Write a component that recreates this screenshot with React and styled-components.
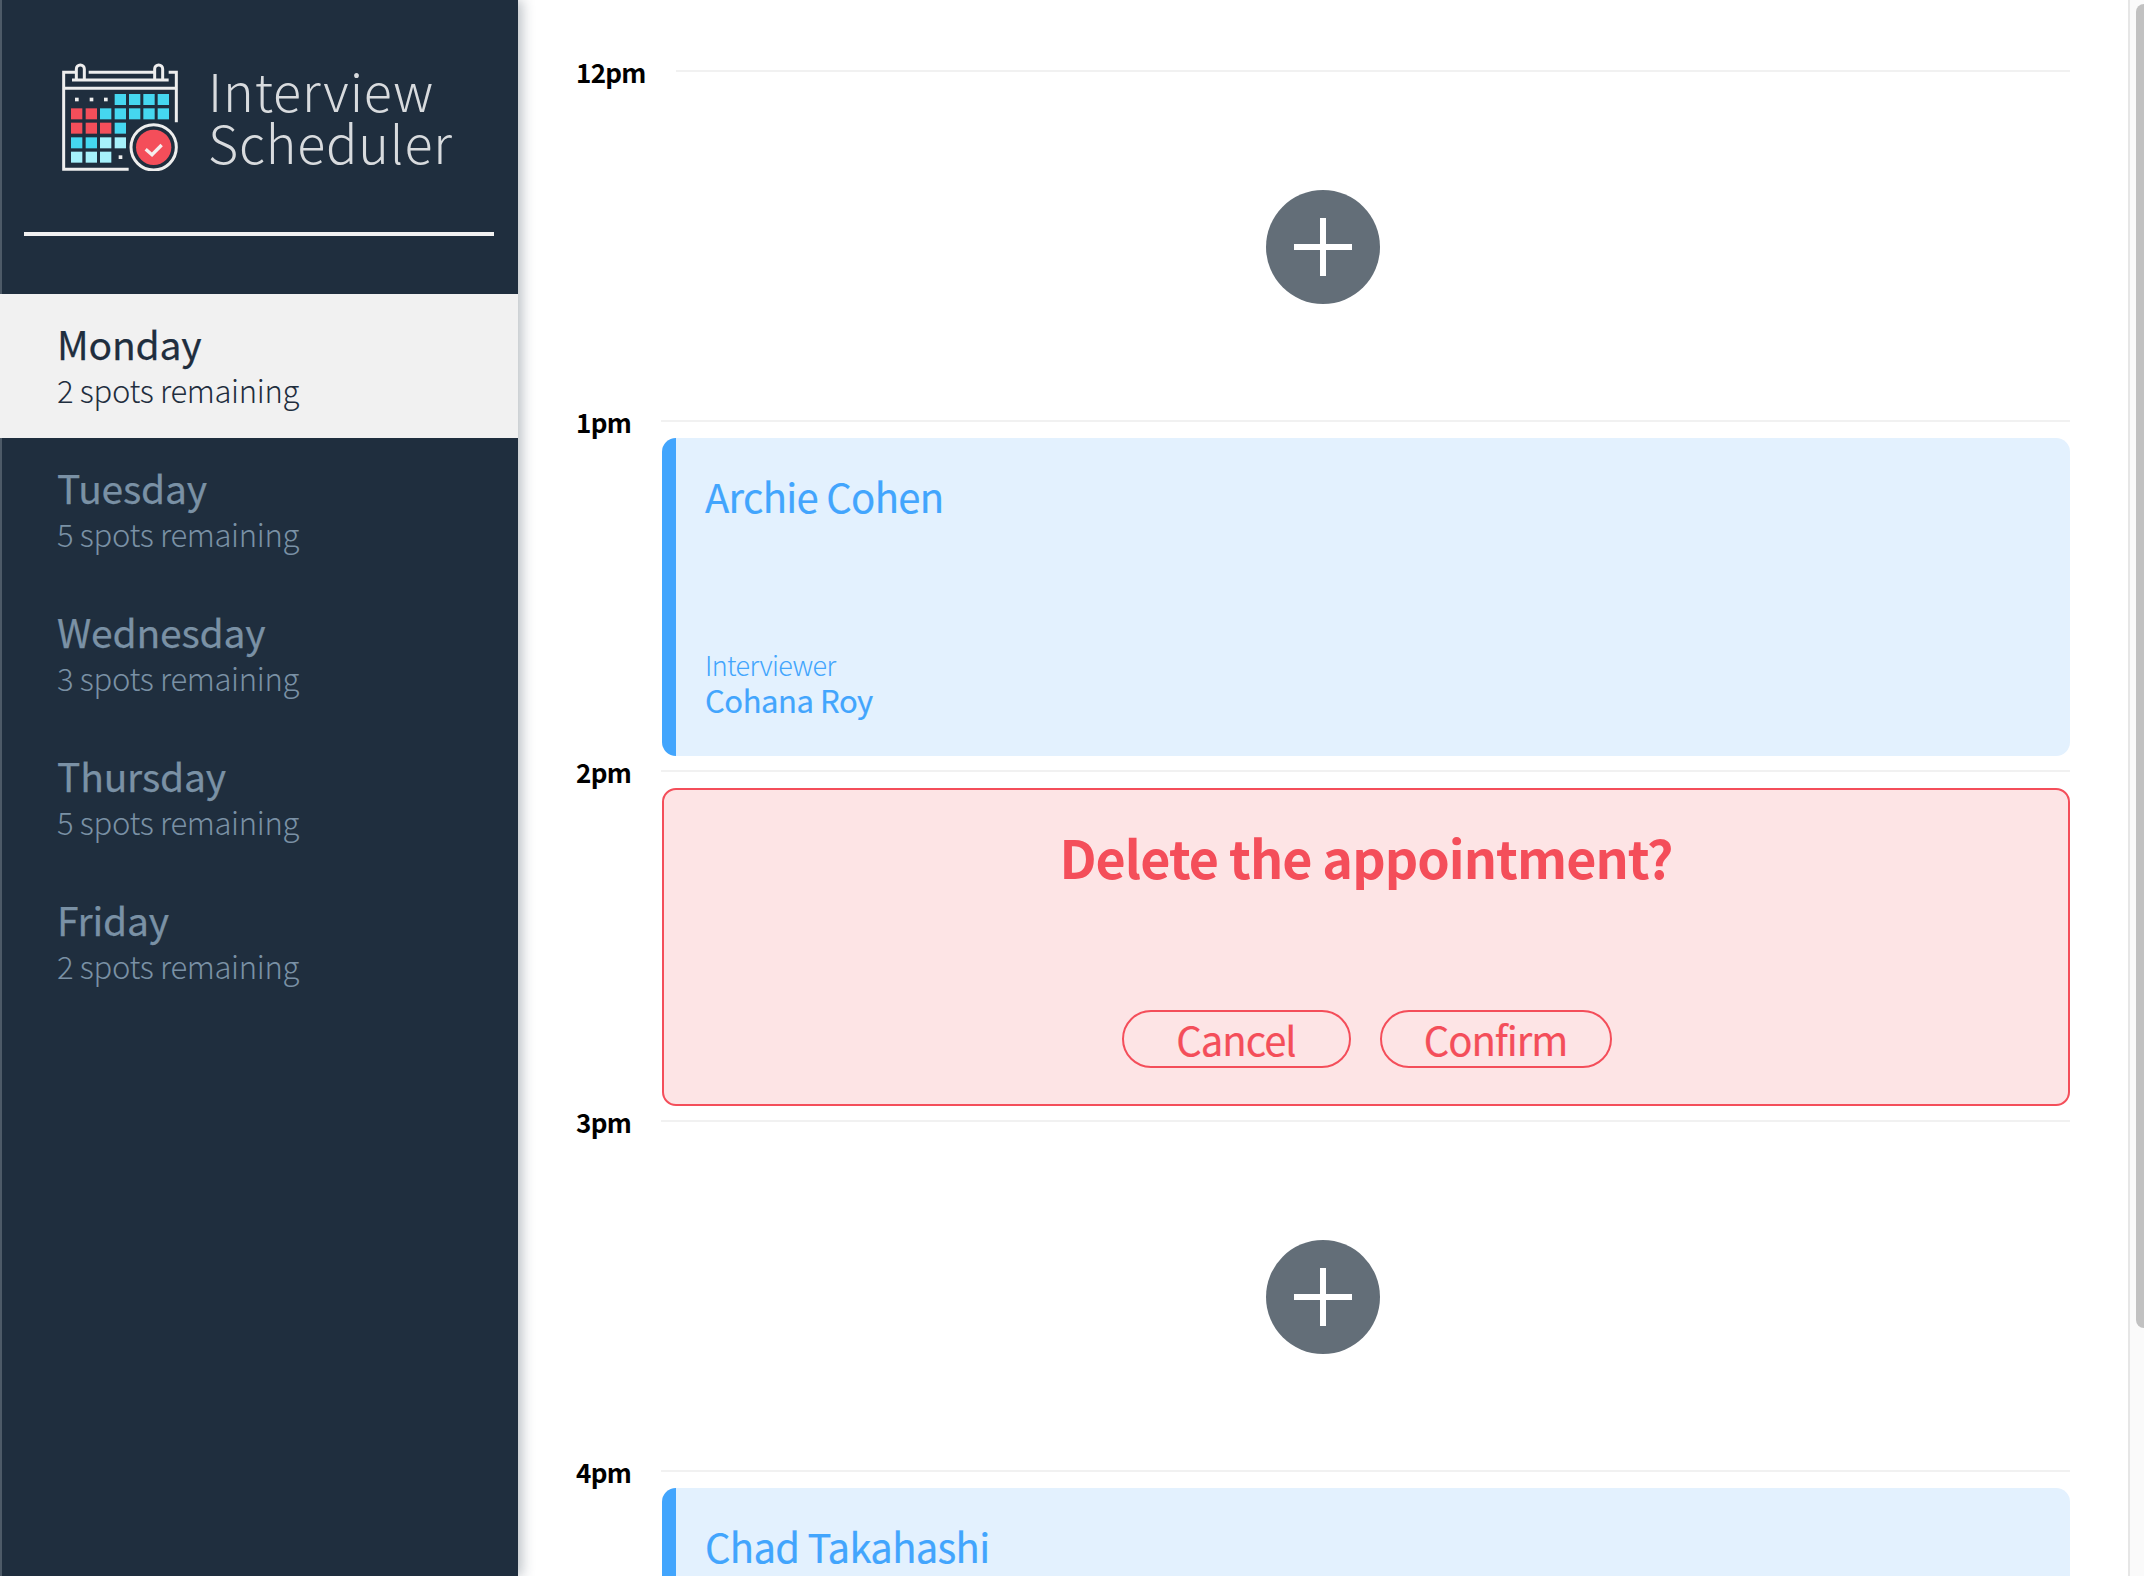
import React from "react";
import styled, { createGlobalStyle } from "styled-components";

const GlobalStyle = createGlobalStyle`
  html, body {
    margin: 0;
    height: 100%;
    overflow: hidden;
    background: #fff;
  }
  * { box-sizing: border-box; }
`;

const FONT = `"Noto Sans CJK SC", "Open Sans", sans-serif`;

const Page = styled.div`
  display: flex;
  height: 1576px;
  overflow: hidden;
  font-family: ${FONT};
`;

const Sidebar = styled.nav`
  flex: 0 0 518px;
  background: #1f2e3e;
  box-shadow: inset 2px 0 0 #4d5a67, 4px 0 12px rgba(31, 46, 62, 0.3);
  z-index: 1;
`;

const Brand = styled.div`
  height: 294px;
  padding: 63px 24px 0;
`;

const BrandRow = styled.div`
  display: flex;
  align-items: center;
  gap: 30px;
  padding-left: 37px;
  height: 173px;
  border-bottom: 4px solid #f1f1f1;
  padding-bottom: 62px;
`;

const BrandTitle = styled.div`
  font-size: 52px;
  font-weight: 300;
  line-height: 52px;
  color: #d8dbde;
  letter-spacing: 0.85px;
  margin-top: -1px;
`;

const DayItem = styled.div`
  height: 144px;
  padding: 23px 0 0 57px;
  background: ${(p) => (p.$active ? "#f1f1f1" : "transparent")};
  color: ${(p) => (p.$active ? "#1f2e3e" : "#7a91a5")};
`;

const DayName = styled.div`
  font-size: 39px;
  line-height: 52px;
  font-weight: 400;
  letter-spacing: -0.2px;
  -webkit-text-stroke: 0.25px currentColor;
`;

const DaySpots = styled.div`
  font-size: 31px;
  line-height: 42px;
  font-weight: 300;
  letter-spacing: -0.33px;
`;

const Main = styled.main`
  flex: 1;
  min-width: 0;
  padding: 70px 58px 0;
  overflow: hidden;
`;

const Slot = styled.article`
  height: 350px;
`;

const SlotHeader = styled.div`
  display: flex;
  align-items: center;
  height: 2px;
`;

const SlotTime = styled.h4`
  margin: 0 30px 0 0;
  font-size: 26px;
  font-weight: 700;
  letter-spacing: -0.7px;
  color: #000;
`;

const SlotRule = styled.div`
  flex: 1;
  height: 2px;
  background: #f1f1f1;
`;

const EmptyBody = styled.div`
  height: 348px;
  padding-top: 2px;
  display: flex;
  align-items: center;
  justify-content: center;
`;

const AddButton = styled.div`
  width: 114px;
  height: 114px;
  border-radius: 50%;
  background: #636e78;
  display: flex;
  align-items: center;
  justify-content: center;
`;

const BookedCard = styled.div`
  margin: 16px 0 0 86px;
  height: 318px;
  background: #e3f1fe;
  border-left: 14px solid #42a5fd;
  border-radius: 14px;
  padding: 26px 29px 39px;
  color: #42a5fd;
  display: flex;
  flex-direction: column;
`;

const StudentName = styled.div`
  font-size: 40px;
  line-height: 64px;
  font-weight: 400;
  letter-spacing: -0.7px;
  -webkit-text-stroke: 0.2px currentColor;
`;

const InterviewerBlock = styled.div`
  margin-top: auto;
`;

const InterviewerLabel = styled.div`
  font-size: 27px;
  line-height: 34px;
  font-weight: 300;
  letter-spacing: -0.65px;
`;

const InterviewerName = styled.div`
  font-size: 31px;
  line-height: 35px;
  font-weight: 400;
  letter-spacing: -0.45px;
  -webkit-text-stroke: 0.2px currentColor;
`;

const ConfirmCard = styled.div`
  margin: 16px 0 0 86px;
  height: 318px;
  background: #fde4e5;
  border: 2px solid #f44e5a;
  border-radius: 14px;
  color: #f44e5a;
  display: flex;
  flex-direction: column;
  align-items: center;
  padding: 33px 0 36px;
`;

const ConfirmTitle = styled.h1`
  margin: 0;
  font-size: 52px;
  line-height: 68px;
  font-weight: 700;
  letter-spacing: -0.95px;
`;

const ConfirmActions = styled.div`
  margin-top: auto;
  margin-left: 1px;
  display: flex;
  gap: 29px;
`;

const PillButton = styled.div`
  width: ${(p) => p.$w}px;
  height: 58px;
  border: 2px solid #f44e5a;
  border-radius: 29px;
  display: flex;
  align-items: center;
  justify-content: center;
  font-size: 40px;
  line-height: 54px;
  font-weight: 400;
  letter-spacing: -1px;
  -webkit-text-stroke: 0.2px currentColor;
`;

const ScrollTrack = styled.div`
  flex: 0 0 16px;
  background: #fafafa;
  border-left: 2px solid #e6e6e6;
  padding: 4px 0 0 6px;
  overflow: hidden;
`;

const ScrollThumb = styled.div`
  width: 20px;
  height: 1324px;
  background: #c1c1c1;
  border-radius: 8px;
`;

const Logo = () => {
  const xs = [92, 136, 179, 223, 266, 309, 352];
  const ys = [130, 173, 216, 260, 303];
  const C = "#45d7f0";
  const R = "#f44e5a";
  const L = "#a6f1fb";
  const grid = [
    ["d", "d", "d", C, C, C, C],
    [R, R, C, C, C, C, C],
    [R, R, R, C],
    [C, C, L, L],
    [L, L, L, "d"],
  ];
  return (
    <svg width="117" height="108" viewBox="62 37 351 324" style={{ flex: "none" }}>
      <g fill="none" stroke="#eeeeee" strokeWidth="9">
        <path d="M106 65H70V356H265" />
        <path d="M145 65H345" />
        <path d="M385 65H408V215" />
        <path d="M70 113H408" />
        <path d="M95 88H385" />
        <path d="M108 88V55a12 12 0 0 1 24 0V88" />
        <path d="M343 88V55a12 12 0 0 1 24 0V88" />
        <circle cx="340" cy="290" r="68" />
      </g>
      {grid.map((row, r) =>
        row.map((c, i) =>
          c === "d" ? (
            <rect key={`${r}-${i}`} x={xs[i] + 12} y={ys[r] + 11} width="11" height="11" fill="#eeeeee" />
          ) : (
            <rect key={`${r}-${i}`} x={xs[i]} y={ys[r]} width="34" height="33" fill={c} />
          )
        )
      )}
      <circle cx="340" cy="290" r="53" fill={R} />
      <path d="M316 296l19 16 29-29" fill="none" stroke="#f5eeee" strokeWidth="10" />
    </svg>
  );
};

const PlusIcon = () => (
  <svg width="58" height="58" viewBox="0 0 58 58">
    <path d="M29 0V58M0 29H58" stroke="#fff" strokeWidth="6" />
  </svg>
);

const DAYS = [
  { name: "Monday", spots: 2, active: true },
  { name: "Tuesday", spots: 5 },
  { name: "Wednesday", spots: 3 },
  { name: "Thursday", spots: 5 },
  { name: "Friday", spots: 2 },
];

const TimeHeader = ({ time }) => (
  <SlotHeader>
    <SlotTime>{time}</SlotTime>
    <SlotRule />
  </SlotHeader>
);

const App = () => (
  <Page>
    <GlobalStyle />
    <Sidebar>
      <Brand>
        <BrandRow>
          <Logo />
          <BrandTitle>
            Interview
            <br />
            Scheduler
          </BrandTitle>
        </BrandRow>
      </Brand>
      {DAYS.map((d) => (
        <DayItem key={d.name} $active={d.active}>
          <DayName>{d.name}</DayName>
          <DaySpots>{d.spots} spots remaining</DaySpots>
        </DayItem>
      ))}
    </Sidebar>
    <Main>
      <Slot>
        <TimeHeader time="12pm" />
        <EmptyBody>
          <AddButton>
            <PlusIcon />
          </AddButton>
        </EmptyBody>
      </Slot>
      <Slot>
        <TimeHeader time="1pm" />
        <BookedCard>
          <StudentName>Archie Cohen</StudentName>
          <InterviewerBlock>
            <InterviewerLabel>Interviewer</InterviewerLabel>
            <InterviewerName>Cohana Roy</InterviewerName>
          </InterviewerBlock>
        </BookedCard>
      </Slot>
      <Slot>
        <TimeHeader time="2pm" />
        <ConfirmCard>
          <ConfirmTitle>Delete the appointment?</ConfirmTitle>
          <ConfirmActions>
            <PillButton $w={229}>Cancel</PillButton>
            <PillButton $w={232}>Confirm</PillButton>
          </ConfirmActions>
        </ConfirmCard>
      </Slot>
      <Slot>
        <TimeHeader time="3pm" />
        <EmptyBody>
          <AddButton>
            <PlusIcon />
          </AddButton>
        </EmptyBody>
      </Slot>
      <Slot>
        <TimeHeader time="4pm" />
        <BookedCard>
          <StudentName>Chad Takahashi</StudentName>
        </BookedCard>
      </Slot>
    </Main>
    <ScrollTrack>
      <ScrollThumb />
    </ScrollTrack>
  </Page>
);

export default App;
